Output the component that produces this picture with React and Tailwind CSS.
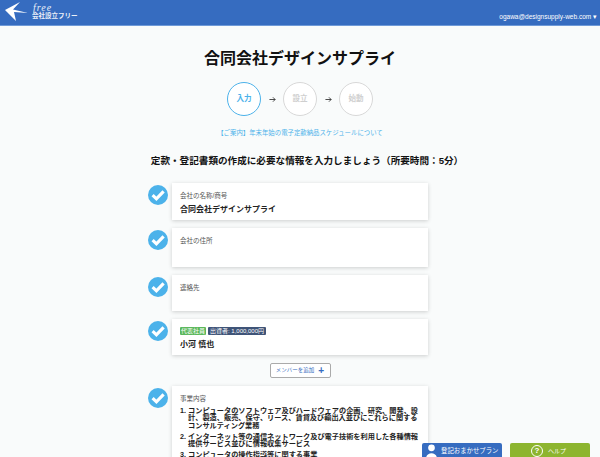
import React from 'react';

const FONT = '"Liberation Sans", "Noto Sans CJK JP", sans-serif';

function CheckBadge() {
  return (
    <svg viewBox="0 0 20 20" className="w-5 h-5 shrink-0 mt-0.5">
      <circle cx="10" cy="10" r="10" fill="#4cb2ea" />
      <path d="M4.6 10.2 L8.4 13.8 L15.6 6.4" fill="none" stroke="#fff" strokeWidth="3.2" />
    </svg>
  );
}

function Row({ height, children }) {
  return (
    <div className="flex gap-1 ml-[148px] w-[280px]">
      <CheckBadge />
      <div className="w-[256px] bg-white shadow-[0_1px_4px_rgba(0,0,0,0.18)] px-2 pt-2 text-[#222]" style={{ height }}>
        {children}
      </div>
    </div>
  );
}

function Label({ children }) {
  return <div className="text-[6.5px] leading-[9px] text-[#555]">{children}</div>;
}

function Step({ label, active }) {
  return (
    <div
      className={`w-[34px] h-[34px] rounded-full bg-white flex items-center justify-center text-[7.5px] font-bold border ${
        active ? 'border-[#4cb2ea] text-[#4cb2ea]' : 'border-[#d8d8d8] text-[#cfcfcf]'
      }`}
    >
      {label}
    </div>
  );
}

function Arrow() {
  return (
    <svg viewBox="0 0 8 8" className="w-[7px] h-[7px]">
      <path d="M0.5 4 H7 M4.5 1.5 L7 4 L4.5 6.5" fill="none" stroke="#333" strokeWidth="1" />
    </svg>
  );
}

export default function App() {
  return (
    <div className="relative h-[457px] w-[600px] overflow-hidden bg-[#f9fbfb]" style={{ fontFamily: FONT }}>
      {/* header */}
      <header className="h-[26px] bg-[#366cc0] border-b border-[#6f9ad8] flex justify-between text-white">
        <div className="flex items-start pl-[5px] pt-[1px]">
          <svg viewBox="0 0 24 22" className="w-[24px] h-[22px] shrink-0">
            <path d="M0 9 L15 1 L8 8.5 L23 12 L9 11 L11 20 Z" fill="#fff" />
          </svg>
          <div className="pl-[3px]">
            <div className="text-[10px] leading-[9px] italic tracking-[1px] pl-[1px] mt-[2px] opacity-90" style={{ fontFamily: '"Liberation Serif", serif' }}>free</div>
            <div className="text-[6.5px] leading-[8px] font-bold mt-[0px] opacity-90">会社設立フリー</div>
          </div>
        </div>
        <div className="text-[6.5px] leading-[8px] pr-[3px] pt-[13px]">ogawa@designsupply-web.com ▾</div>
      </header>

      <h1 className="text-[16px] font-bold text-center mt-[22px] leading-[22px] text-[#111]">合同会社デザインサプライ</h1>

      {/* steps */}
      <div className="flex items-center justify-center gap-[7.5px] mt-[12px]">
        <Step label="入力" active />
        <Arrow />
        <Step label="設立" />
        <Arrow />
        <Step label="始動" />
      </div>

      <p className="text-[6.4px] leading-[10px] text-center text-[#4cb2ea] mt-[12px]">【ご案内】年末年始の電子定款納品スケジュールについて</p>

      <h2 className="text-[9.6px] leading-[14px] font-bold text-center mt-[16px] pl-[14px] text-[#111]">
        定款・登記書類の作成に必要な情報を入力しましょう（所要時間：5分）
      </h2>

      <div className="flex flex-col gap-2 mt-[15px]">
        <Row height={37}>
          <Label>会社の名称/商号</Label>
          <div className="text-[8px] font-bold leading-[10px] mt-[5px]">合同会社デザインサプライ</div>
        </Row>
        <Row height={39}>
          <Label>会社の住所</Label>
        </Row>
        <Row height={36}>
          <Label>連絡先</Label>
        </Row>
        <Row height={36}>
          <div className="flex gap-[2px] text-[6px] leading-[8px] text-white">
            <span className="bg-[#5cb85c] px-[1px] rounded-[1px]">代表社員</span>
            <span className="bg-[#3f5478] px-[2px] rounded-[1px]">出資者: 1,000,000円</span>
          </div>
          <div className="text-[8px] font-bold leading-[10px] mt-[5px]">小河 慎也</div>
        </Row>
      </div>

      <div className="flex justify-center mt-2">
        <button className="w-[61px] h-[15px] bg-white border border-[#aaa] rounded-[2px] text-[5.5px] text-[#366cc0] flex items-center justify-center gap-[4px]">
          メンバーを追加
          <span className="text-[10px] leading-[9px] font-bold">+</span>
        </button>
      </div>

      <div className="mt-2">
        <Row height={120}>
          <Label>事業内容</Label>
          <ol className="text-[7.2px] font-bold leading-[7.3px] mt-[4px] text-[#222]">
            <li className="flex gap-[1px] mb-[4px]"><span className="w-[7px] shrink-0">1.</span><span className="w-[232px]">コンピュータのソフトウェア及びハードウェアの企画、研究、開発、設計、製造、販売、保守、リース、賃貸及び輸出入並びにこれらに関するコンサルティング業務</span></li>
            <li className="flex gap-[1px] mb-[4px]"><span className="w-[7px] shrink-0">2.</span><span className="w-[232px]">インターネット等の通信ネットワーク及び電子技術を利用した各種情報提供サービス並びに情報収集サービス</span></li>
            <li className="flex gap-[1px]"><span className="w-[7px] shrink-0">3.</span><span className="w-[232px]">コンピュータの操作指導等に関する事業</span></li>
          </ol>
        </Row>
      </div>

      {/* fixed buttons */}
      <div className="absolute left-[422px] top-[443px] w-[80px] h-[14px] overflow-hidden bg-[#366cc0] rounded-t-[2px] flex items-start text-white text-[6.4px] leading-[14px] pl-[3px] pt-[1px]">
        <svg viewBox="0 0 14 16" className="w-[13px] h-[15px] mr-[3px] shrink-0">
          <circle cx="7" cy="4" r="3.6" fill="#fff" />
          <path d="M1 16 C1 8 13 8 13 16 Z" fill="#fff" />
        </svg>
        登記おまかせプラン
      </div>
      <div className="absolute left-[510px] top-[443px] w-[80px] h-[14px] overflow-hidden bg-[#8db52f] rounded-t-[2px] flex items-start justify-center gap-[5px] pr-[3px] text-white text-[6px] leading-[12px] pt-[2px]">
        <span className="w-[12px] h-[12px] rounded-full border-[1.5px] border-white flex items-center justify-center text-[8px] font-bold leading-none shrink-0">?</span>
        ヘルプ
      </div>
    </div>
  );
}
